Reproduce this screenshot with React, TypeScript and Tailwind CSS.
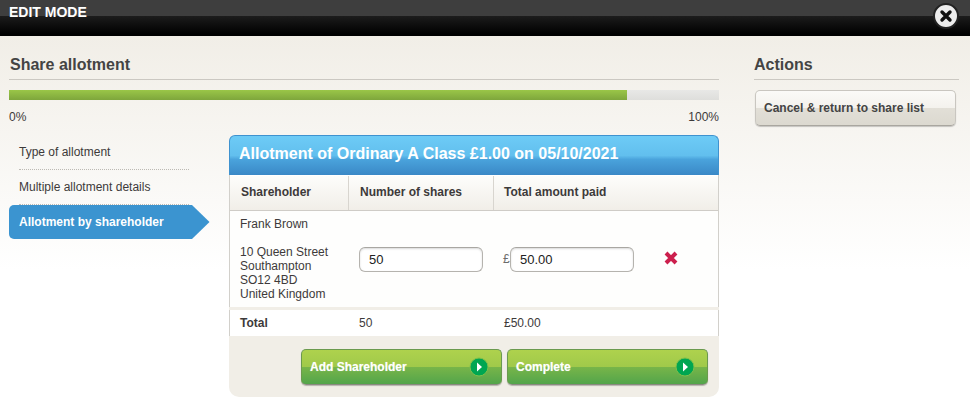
export default function App() {
  const Arrow = () => (
    <svg width="20" height="20" viewBox="0 0 20 20" className="shrink-0">
      <circle cx="10" cy="10" r="9" fill="#00a651" stroke="#7cc04a" strokeWidth="1" />
      <path d="M8 5.5 L13 10 L8 14.5 Z" fill="#fff" />
    </svg>
  );
  const GreenBtn = ({ label }: { label: string }) => (
    <button className="w-[201px] h-[36px] rounded-[5px] border border-[#6b9a4e] border-b-[#8a8a80] shadow-[0_1px_1px_rgba(0,0,0,0.25)] bg-[linear-gradient(#aed24d_0,#a0c94a_50%,#78b549_50%,#53a54b_100%)] flex items-center justify-between pl-[8px] pr-[12px] text-[12px] font-bold text-white [text-shadow:0_0_1px_rgba(255,255,255,0.5)]">
      <span>{label}</span>
      <Arrow />
    </button>
  );
  return (
    <div className="w-[970px] h-[414px] overflow-hidden bg-[linear-gradient(#f1eee7_36px,#ffffff_270px)] font-['Liberation_Sans',Arial,sans-serif] text-[12px] text-[#3d3a3a]">
      <div className="relative h-[36px] bg-[linear-gradient(#3e3e3e_0,#3e3e3e_16px,#1c1c1c_16px,#000_34px)]">
        <div className="pl-[9px] pt-[4px] text-[14px] leading-[16px] font-bold text-white">EDIT MODE</div>
        <svg width="26" height="26" viewBox="0 0 26 26" className="absolute left-[933px] top-[3px]">
          <circle cx="13" cy="13" r="12" fill="#ececec" stroke="#222" strokeWidth="2" />
          <path d="M9 9 L17 17 M17 9 L9 17" stroke="#111" strokeWidth="3.4" strokeLinecap="round" />
        </svg>
      </div>

      <div className="flex pl-[9px] pt-[18px]">
        <div className="w-[710px]">
          <h2 className="h-[26px] pl-[1px] pt-[1px] border-b border-[#cbc8c2] text-[16px] leading-[20px] font-bold text-[#444]">Share allotment</h2>
          <div className="mt-[10px] h-[10px] bg-[linear-gradient(#e8e8e6,#dededb)]">
            <div className="h-full w-[618px] bg-[linear-gradient(#9ac648,#7ea63c)]"></div>
          </div>
          <div className="mt-[9px] flex justify-between leading-[16px]">
            <span>0%</span>
            <span>100%</span>
          </div>

          <div className="mt-[10px] flex">
            <div className="w-[220px] shrink-0">
              <div className="ml-[10px] mr-[40px] h-[35px] pt-[9px] leading-[16px] border-b border-dotted border-[#bdbab4]">Type of allotment</div>
              <div className="ml-[10px] mr-[40px] h-[35px] pt-[9px] leading-[16px] border-b border-dotted border-[#bdbab4]">Multiple allotment details</div>
              <div className="relative w-[201px] h-[34px]">
                <div className="h-[34px] w-[182px] rounded-l-[5px] bg-[#3b94d0] pl-[10px] leading-[34px] font-bold text-white">Allotment by shareholder</div>
                <svg width="20" height="34" viewBox="0 0 20 34" className="absolute left-[181px] top-0">
                  <path d="M0 0 H2 L19.5 17 L2 34 H0 Z" fill="#3b94d0" />
                </svg>
              </div>
            </div>

            <div className="w-[490px]">
              <div className="h-[40px] rounded-t-[6px] border-t border-x border-[#3f92cf] bg-[linear-gradient(#6dcbf6_0,#62bfee_50%,#4aa3dc_60%,#3a88c6_100%)] pl-[9px] text-[16px] leading-[36px] font-bold text-white">
                Allotment of Ordinary A Class £1.00 on 05/10/2021
              </div>
              <div className="border-x border-[#d2d0cb] bg-white">
                <div className="flex h-[36px] border-t border-white border-b-[1px] border-b-[#cfccc7] bg-[linear-gradient(#fdfdfb,#f1eee8)] font-bold leading-[33px]">
                  <div className="w-[119px] pl-[11px] border-r border-[#d8d5cf]">Shareholder</div>
                  <div className="w-[145px] pl-[11px] border-r border-[#d8d5cf]">Number of shares</div>
                  <div className="pl-[10px]">Total amount paid</div>
                </div>
                <div className="flex h-[96px] bg-[#fefefd]">
                  <div className="w-[119px] pl-[10px] pt-[6px] leading-[14px]">
                    <div>Frank Brown</div>
                    <div className="mt-[14px]">10 Queen Street</div>
                    <div>Southampton</div>
                    <div>SO12 4BD</div>
                    <div>United Kingdom</div>
                  </div>
                  <div className="w-[145px] pl-[10px] pt-[36px]">
                    <input
                      readOnly
                      value="50"
                      className="w-[124px] h-[25px] rounded-[6px] border border-[#b5b3ae] border-t-[#a9a7a2] bg-white pl-[9px] text-[13px] text-[#222] shadow-[inset_0_1px_2px_rgba(0,0,0,0.15)] outline-none"
                    />
                  </div>
                  <div className="flex w-[160px] items-start pl-[9px] pt-[36px]">
                    <span className="w-[7px] leading-[25px] text-[#6b6b6b]">£</span>
                    <input
                      readOnly
                      value="50.00"
                      className="w-[124px] h-[25px] rounded-[6px] border border-[#b5b3ae] border-t-[#a9a7a2] bg-white pl-[9px] text-[13px] text-[#222] shadow-[inset_0_1px_2px_rgba(0,0,0,0.15)] outline-none"
                    />
                  </div>
                  <div className="pt-[40px] pl-[10px]">
                    <svg width="14" height="14" viewBox="0 0 14 14">
                      <path d="M2 2 L12 12 M12 2 L2 12" stroke="#cc1f4d" strokeWidth="4" />
                    </svg>
                  </div>
                </div>
                <div className="h-[3px] -mx-[1px] bg-[#f1eee7]"></div>
                <div className="flex h-[26px] leading-[26px]">
                  <div className="w-[119px] pl-[10px] font-bold">Total</div>
                  <div className="w-[145px] pl-[10px]">50</div>
                  <div className="pl-[10px]">£50.00</div>
                </div>
              </div>
              <div className="flex h-[61px] justify-end gap-[5px] rounded-b-[10px] bg-[#f1eee7] pt-[13px] pr-[11px]">
                <GreenBtn label="Add Shareholder" />
                <GreenBtn label="Complete" />
              </div>
            </div>
          </div>
        </div>

        <div className="ml-[35px] w-[205px]">
          <h2 className="h-[26px] pt-[1px] border-b border-[#cbc8c2] text-[16px] leading-[20px] font-bold text-[#444]">Actions</h2>
          <button className="mt-[10px] ml-[1px] block h-[36px] w-[201px] rounded-[5px] border border-[#c9c6c0] border-b-[#a9a69f] bg-[linear-gradient(#fbfaf8_0,#f4f2ed_50%,#e2dfd7_50%,#dcd9d0_100%)] pl-[8px] text-left text-[12px] font-bold text-[#444] shadow-[0_1px_1px_rgba(0,0,0,0.2)]">
            Cancel &amp; return to share list
          </button>
        </div>
      </div>
    </div>
  );
}
